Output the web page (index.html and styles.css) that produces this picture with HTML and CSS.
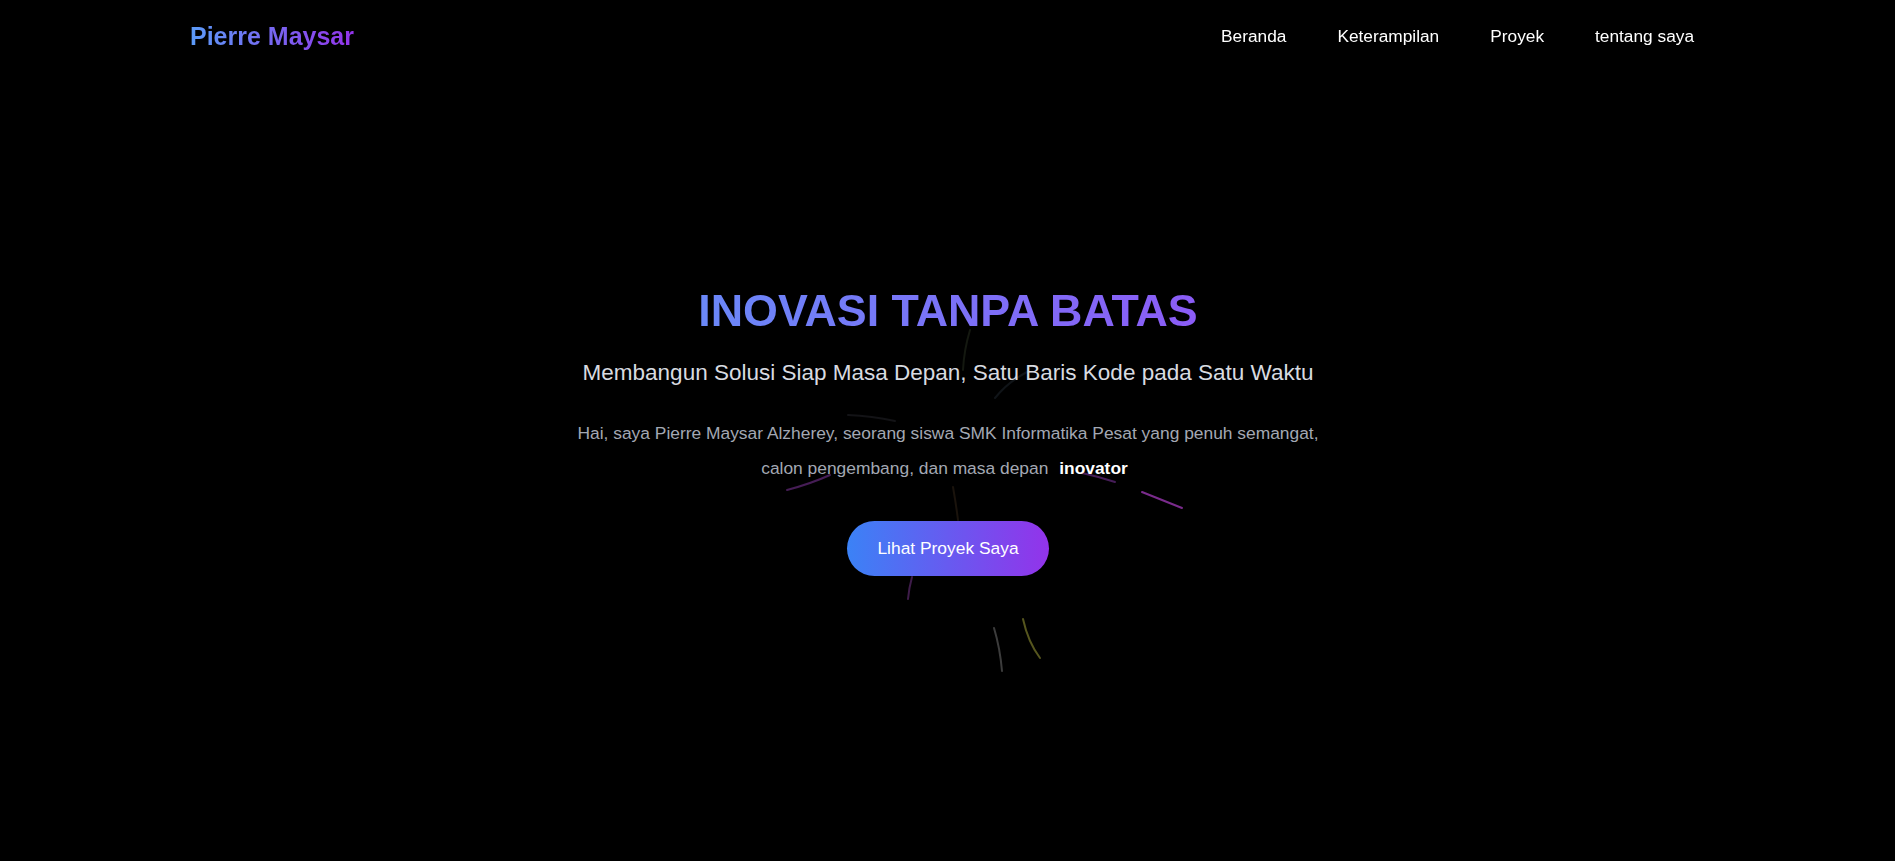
FILE: index.html
```html
<!DOCTYPE html>
<html lang="id">
<head>
<meta charset="utf-8">
<title>Pierre Maysar</title>
<link rel="stylesheet" href="styles.css">
</head>
<body>
<header class="site-header">
  <a class="logo" href="#">Pierre Maysar</a>
  <nav class="nav">
    <a href="#beranda">Beranda</a>
    <a href="#keterampilan">Keterampilan</a>
    <a href="#proyek">Proyek</a>
    <a href="#tentang">tentang saya</a>
  </nav>
</header>

<main>
  <section class="hero" id="beranda">
    <svg class="particles" viewBox="0 0 1895 861" width="1895" height="861" aria-hidden="true">
      <g fill="none" stroke-width="2" stroke-linecap="round">
        <path d="M970 330 Q964 350 963 370" stroke="#141810"/>
        <path d="M1027 372 Q1008 382 995 398" stroke="#101418"/>
        <path d="M848 415 Q872 416 895 421" stroke="#131316"/>
        <path d="M787 490 Q810 484 830 475" stroke="#461d56"/>
        <path d="M1082 473 Q1100 477 1115 482" stroke="#461d58"/>
        <path d="M1142 492 L1182 508" stroke="#7a2b8c"/>
        <path d="M953 487 Q956 504 958 520" stroke="#1a130c"/>
        <path d="M912 577 Q909 588 908 599" stroke="#3e1c4a"/>
        <path d="M994 628 Q1000 648 1002 671" stroke="#3c3c3c"/>
        <path d="M1023 619 Q1028 642 1040 658" stroke="#56561e"/>
      </g>
    </svg>
    <div class="hero-content">
      <h1 class="hero-title">INOVASI TANPA BATAS</h1>
      <p class="hero-subtitle">Membangun Solusi Siap Masa Depan, Satu Baris Kode pada Satu Waktu</p>
      <p class="hero-text">Hai, saya Pierre Maysar Alzherey, seorang siswa SMK Informatika Pesat yang penuh semangat, calon pengembang, dan masa depan <span class="highlight">inovator</span></p>
      <a class="btn" href="#proyek">Lihat Proyek Saya</a>
    </div>
  </section>
</main>
</body>
</html>
```

FILE: styles.css
```css
* {
  box-sizing: border-box;
}

html, body {
  margin: 0;
  padding: 0;
}

body {
  background: #000;
  color: #fff;
  font-family: "Liberation Sans", Arial, sans-serif;
  overflow: hidden;
}

a {
  text-decoration: none;
}

.site-header {
  position: fixed;
  top: 0;
  left: 0;
  right: 0;
  height: 73px;
  display: flex;
  align-items: center;
  justify-content: space-between;
  padding: 0 201px 0 190px;
  z-index: 10;
}

.logo {
  font-size: 25px;
  font-weight: 700;
  background: linear-gradient(90deg, #5b9bf8, #9333ea);
  -webkit-background-clip: text;
  background-clip: text;
  color: transparent;
}

.nav {
  display: flex;
  align-items: center;
  gap: 51px;
}

.nav a {
  color: #fff;
  font-size: 17.3px;
}

.hero {
  position: relative;
  height: 100vh;
  display: flex;
  align-items: center;
  justify-content: center;
}

.particles {
  position: absolute;
  top: 0;
  left: 0;
  pointer-events: none;
  z-index: 0;
}

.hero-content {
  position: relative;
  z-index: 1;
  display: flex;
  flex-direction: column;
  align-items: center;
  text-align: center;
  padding-left: 1px;
}

.hero-title {
  margin: 0 0 25px;
  font-size: 44.8px;
  line-height: 50px;
  font-weight: 700;
  background: linear-gradient(90deg, #6a88f8, #8b5cf6);
  -webkit-background-clip: text;
  background-clip: text;
  color: transparent;
}

.hero-subtitle {
  margin: 0 0 29.5px;
  font-size: 22.5px;
  line-height: 26px;
  color: #d8dbe0;
}

.hero-text {
  margin: 0 0 35.5px;
  max-width: 770px;
  font-size: 17.4px;
  line-height: 34.8px;
  color: #a3a8b3;
}

.highlight {
  margin-left: 6px;
  padding-right: 7px;
  color: #fff;
  font-weight: 700;
}

.btn {
  display: inline-block;
  padding: 17px 30.5px;
  line-height: 21px;
  font-size: 17.4px;
  color: #fff;
  border-radius: 30px;
  background: linear-gradient(90deg, #3b82f6, #9333ea);
}
```
